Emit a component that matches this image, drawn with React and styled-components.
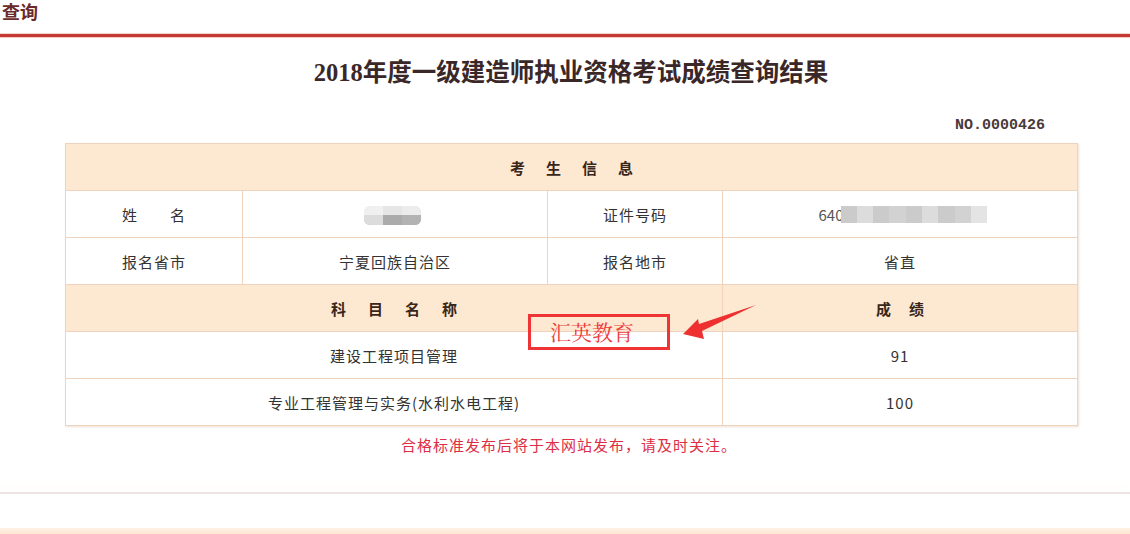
import React from "react";
import styled, { createGlobalStyle } from "styled-components";

const GlobalStyle = createGlobalStyle`
  body {
    margin: 0;
    background: #fff;
    font-family: "Noto Sans CJK SC", "Noto Sans", sans-serif;
  }
`;

export default function App() {
  return (
    <Page>
      <GlobalStyle />
      <TopBar>
        <span className="crumb">查询</span>
      </TopBar>
      <RedRule />

      <Title>2018年度一级建造师执业资格考试成绩查询结果</Title>
      <SerialNo>NO.0000426</SerialNo>

      <TableWrap>
        <Table>
          <colgroup>
            <col style={{ width: 177 }} />
            <col style={{ width: 305 }} />
            <col style={{ width: 175 }} />
            <col style={{ width: 355 }} />
          </colgroup>
          <tbody>
            <tr>
              <HeadCell colSpan={4} $spacing={21}>考生信息</HeadCell>
            </tr>
            <tr>
              <Cell>姓&emsp;&emsp;名</Cell>
              <Cell>
                <NameBlur>
                  <i />
                  <i />
                  <i />
                </NameBlur>
              </Cell>
              <Cell>证件号码</Cell>
              <Cell>
                <IdValue>
                  640
                  <IdBlur>
                    {[0, 1, 2, 3, 4, 5, 6, 7, 8].map((n) => (
                      <i key={n} />
                    ))}
                  </IdBlur>
                </IdValue>
              </Cell>
            </tr>
            <tr>
              <Cell>报名省市</Cell>
              <Cell>宁夏回族自治区</Cell>
              <Cell>报名地市</Cell>
              <Cell>省直</Cell>
            </tr>
            <tr>
              <HeadCell colSpan={3} $spacing={22}>科目名称</HeadCell>
              <HeadCell $spacing={18}>成绩</HeadCell>
            </tr>
            <tr>
              <Cell colSpan={3}>建设工程项目管理</Cell>
              <Cell>91</Cell>
            </tr>
            <tr>
              <Cell colSpan={3}>专业工程管理与实务(水利水电工程)</Cell>
              <Cell>100</Cell>
            </tr>
          </tbody>
        </Table>

        <Stamp>汇英教育</Stamp>
        <Arrow width="80" height="40" viewBox="0 0 80 40">
          <polygon points="2,31 17,16 18,21 75,2 21,28 23,36" fill="#ee3030" />
        </Arrow>
      </TableWrap>

      <Notice>合格标准发布后将于本网站发布，请及时关注。</Notice>

      <BottomRule />
      <BottomBand />
    </Page>
  );
}

const Page = styled.div`
  width: 1130px;
  height: 534px;
  overflow: hidden;
  position: relative;
`;

const TopBar = styled.div`
  height: 34px;

  .crumb {
    display: block;
    padding: 1px 0 0 2px;
    font-size: 18px;
    line-height: 20px;
    font-weight: 700;
    color: #6a2a2a;
  }
`;

const RedRule = styled.div`
  height: 3px;
  background: #c43a32;
  box-shadow: 0 1px 1px #f3c6bf, 0 -1px 1px #f3d2cc;
`;

const Title = styled.h1`
  margin: 21px 0 0 0;
  padding-left: 12px;
  text-align: center;
  font-family: "Liberation Serif", "Noto Sans CJK SC", serif;
  font-size: 24.5px;
  line-height: 30px;
  font-weight: 700;
  color: #3a2828;
`;

const SerialNo = styled.div`
  margin-top: 30px;
  width: 1045px;
  text-align: right;
  font-family: "Liberation Mono", monospace;
  font-size: 15px;
  line-height: 16px;
  font-weight: 700;
  color: #4a3a3a;
`;

const TableWrap = styled.div`
  position: relative;
  margin: 9px 0 0 65px;
  width: 1012px;
`;

const Table = styled.table`
  width: 1012px;
  border-collapse: collapse;
  table-layout: fixed;
  box-shadow: 1px 1px 2px #eee0d8;
`;

const HeadCell = styled.td`
  height: 46px;
  padding: 0 0 0 ${(p) => p.$spacing}px;
  background: #fde8d2;
  border: 1px solid #f0d3bd;
  text-align: center;
  font-size: 15px;
  font-weight: 700;
  letter-spacing: ${(p) => p.$spacing}px;
  color: #3a2618;
`;

const Cell = styled.td`
  height: 46px;
  padding: 0;
  background: #fff;
  border: 1px solid #f0d3bd;
  text-align: center;
  font-size: 15px;
  letter-spacing: 1px;
  color: #333;
`;

const NameBlur = styled.span`
  display: inline-flex;
  vertical-align: middle;
  width: 57px;
  height: 19px;
  border-radius: 6px;
  overflow: hidden;
  margin-left: -6px;
  background: linear-gradient(#e6e6e6 0 45%, #ababab 45% 100%);

  i {
    flex: 1;
  }
  i:first-child {
    background: linear-gradient(#f0f0f0 0 45%, #dcdcdc 45% 100%);
  }
  i:last-child {
    background: linear-gradient(#ececec 0 45%, #b3b3b3 45% 100%);
  }
`;

const IdValue = styled.span`
  display: inline-flex;
  align-items: center;
  margin-left: 6px;
  letter-spacing: 0;
  color: #555;
`;

const IdBlur = styled.span`
  display: inline-flex;
  width: 147px;
  height: 17px;
  margin-left: -3px;

  i {
    flex: 1;
    background: #d2d2d2;
  }
  i:nth-child(odd) {
    background: #cbcbcb;
  }
  i:nth-child(2),
  i:nth-child(6) {
    background: #dcdcdc;
  }
  i:last-child {
    background: #e4e4e4;
  }
`;

const Stamp = styled.div`
  position: absolute;
  left: 463px;
  top: 171px;
  height: 30px;
  width: 117px;
  padding-left: 19px;
  border: 3px solid #ee3434;
  font-family: "Noto Serif CJK SC", "Liberation Serif", "Noto Sans CJK SC", serif;
  font-size: 21px;
  line-height: 28px;
  color: #ee3a3a;
`;

const Arrow = styled.svg`
  position: absolute;
  left: 616px;
  top: 160px;
`;

const Notice = styled.div`
  margin-top: 9px;
  width: 1138px;
  text-align: center;
  font-size: 15px;
  letter-spacing: 1px;
  line-height: 20px;
  color: #dd2e46;
`;

const BottomRule = styled.div`
  margin-top: 37px;
  height: 2px;
  background: #ece4e2;
  box-shadow: 0 -6px 8px #fdf8f3;
`;

const BottomBand = styled.div`
  margin-top: 34px;
  height: 8px;
  background: linear-gradient(#fef2e6, #fde2c8);
`;
